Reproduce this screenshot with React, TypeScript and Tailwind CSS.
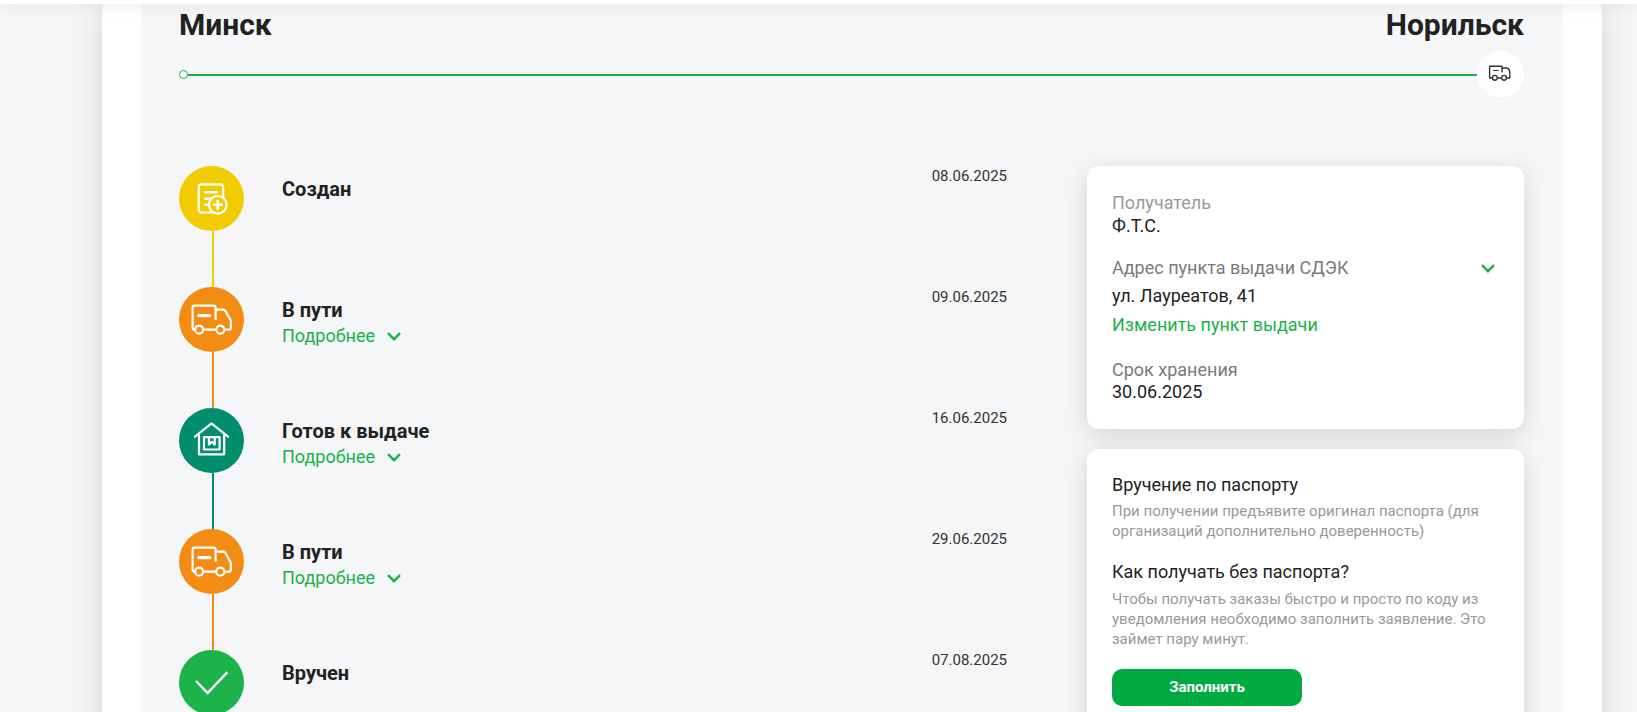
import React from "react";

type StatusKind = "created" | "transit" | "ready" | "delivered";

interface Step {
  kind: StatusKind;
  title: string;
  date: string;
  details: boolean;
}

const steps: Step[] = [
  { kind: "created", title: "Создан", date: "08.06.2025", details: false },
  { kind: "transit", title: "В пути", date: "09.06.2025", details: true },
  { kind: "ready", title: "Готов к выдаче", date: "16.06.2025", details: true },
  { kind: "transit", title: "В пути", date: "29.06.2025", details: true },
  { kind: "delivered", title: "Вручен", date: "07.08.2025", details: false },
];

const fills: Record<StatusKind, string> = {
  created: "bg-[#f2cb00]",
  transit: "bg-[#f28c13]",
  ready: "bg-[#028d6c]",
  delivered: "bg-[#1eb24a]",
};

function Chevron() {
  return (
    <svg width="14" height="9" viewBox="0 0 14 9" fill="none" aria-hidden="true">
      <path d="M1 1.2 7 7.2 13 1.2" stroke="#1ab248" strokeWidth="2.4" />
    </svg>
  );
}

function StatusIcon({ kind }: { kind: StatusKind }) {
  return (
    <svg
      className="size-full"
      viewBox="0 0 65 65"
      fill="none"
      stroke="#fff"
      strokeWidth="2.2"
      strokeLinecap="round"
      strokeLinejoin="round"
      aria-hidden="true"
    >
      {kind === "created" && (
        <>
          <path d="M44.2 30V21.3a3 3 0 0 0-3-3H22.7a3 3 0 0 0-3 3V43.5a3 3 0 0 0 3 3H36" />
          <path d="M26.2 26.2H38M26.2 32.7H31.5M26.2 38.8H29" strokeWidth="2.5" />
          <circle cx="38.8" cy="38.8" r="8.8" />
          <path d="M38.8 34.8V42.8M34.8 38.8H42.8" strokeWidth="2.5" />
        </>
      )}
      {kind === "transit" && (
        <>
          <path d="M16 42.7H15.6a2 2 0 0 1-2-2V20.6a2 2 0 0 1 2-2H34.6a2 2 0 0 1 2 2V32" />
          <path d="M36.6 22.7H44.6a2 2 0 0 1 1.7 1L51.2 32.4a3 3 0 0 1 .6 1.8V40.7a2 2 0 0 1-2 2H45.5M24.2 42.7H37" />
          <path d="M19.8 28.6H30.8" strokeWidth="3.2" />
          <circle cx="20.1" cy="42.7" r="4" />
          <circle cx="41.3" cy="42.7" r="4" />
        </>
      )}
      {kind === "ready" && (
        <>
          <path d="M16 28.7 32.5 15.4 49 28.7M20 27.4V46.3H45.2V27.4" />
          <path d="M25 29.2H40.6V41.5H25ZM29.9 29.4V36.6L32.8 33.8 35.7 36.6V29.4" />
        </>
      )}
      {kind === "delivered" && (
        <path d="M17 31 28.6 43 48.4 22.2" strokeLinecap="butt" strokeLinejoin="miter" strokeWidth="2.4" />
      )}
    </svg>
  );
}

function Timeline() {
  return (
    <ol className="min-w-0 flex-1">
      {steps.map((step, i) => (
        <li key={i} className="flex">
          <div className="flex shrink-0 flex-col items-center">
            <div className={`size-[65px] rounded-full ${fills[step.kind]}`}>
              <StatusIcon kind={step.kind} />
            </div>
            {i < steps.length - 1 && <div className={`ml-[3px] h-14 w-0.5 ${fills[step.kind]}`} />}
          </div>
          <div className="ml-[38px] flex-1 pt-[11px]">
            <h2 className="text-xl leading-6 font-bold">{step.title}</h2>
            {step.details && (
              <button type="button" className="mt-0.5 flex items-center gap-3 text-lg leading-6 text-[#1ab248]">
                Подробнее
                <Chevron />
              </button>
            )}
          </div>
          <time className="text-[15px] leading-5 text-[#333]">{step.date}</time>
        </li>
      ))}
    </ol>
  );
}

function Route() {
  return (
    <section>
      <div className="flex justify-between text-3xl leading-10 font-bold">
        <h1>Минск</h1>
        <p>Норильск</p>
      </div>
      <div className="mt-1.5 flex items-center">
        <span className="size-[9px] rounded-full border border-[#1ab248] bg-white" />
        <span className="h-0.5 flex-1 bg-[#1ab248]" />
        <span className="size-[47px] rounded-full bg-white">
          <svg
            className="size-full"
            viewBox="0 0 47 47"
            fill="none"
            stroke="#333"
            strokeWidth="1.4"
            strokeLinejoin="round"
            aria-hidden="true"
          >
            <path d="M15 27H12.6V15.2H25V21.2M25 17H29.8Q32.8 18 32.8 21.9V27H29.8M20.4 27H24.4" />
            <path d="M16 19.4H21.8" strokeWidth="1" />
            <circle cx="17.8" cy="26.8" r="2.4" />
            <circle cx="27.1" cy="26.8" r="2.4" />
          </svg>
        </span>
      </div>
    </section>
  );
}

const card = "rounded-xl bg-white px-[25px] shadow-[0_6px_24px_rgba(0,0,0,0.14)]";

function RecipientCard() {
  return (
    <section className={`${card} py-[26px] text-lg leading-[22px]`}>
      <p className="text-[#999]">Получатель</p>
      <p className="mt-px">Ф.Т.С.</p>
      <button type="button" className="mt-5 flex w-full items-center justify-between pr-1 text-left text-[#7a7a7a]">
        Адрес пункта выдачи СДЭК
        <Chevron />
      </button>
      <p className="mt-1.5">ул. Лауреатов, 41</p>
      <a href="#pickup" className="mt-[7px] block text-[#1ab248]">
        Изменить пункт выдачи
      </a>
      <p className="mt-[23px] text-[#7a7a7a]">Срок хранения</p>
      <p>30.06.2025</p>
    </section>
  );
}

function PassportCard() {
  return (
    <section className={`${card} pt-[25px] pb-10`}>
      <h3 className="text-lg leading-[22px]">Вручение по паспорту</h3>
      <p className="mt-[5px] text-[15px] leading-5 text-[#999]">
        При получении предъявите оригинал паспорта (для организаций дополнительно доверенность)
      </p>
      <h3 className="mt-5 text-lg leading-[22px]">Как получать без паспорта?</h3>
      <p className="mt-1.5 text-[15px] leading-5 text-[#999]">
        Чтобы получать заказы быстро и просто по коду из уведомления необходимо заполнить заявление. Это займет пару минут.
      </p>
      <button type="button" className="mt-5 h-[37px] w-[190px] rounded-[10px] bg-[#00aa41] text-[15px] font-bold text-white">
        Заполнить
      </button>
    </section>
  );
}

export default function App() {
  return (
    <div className="flex h-screen flex-col overflow-hidden bg-[#f5f6f8] font-[Roboto,sans-serif] text-[#222]">
      <header className="relative z-10 h-1 shrink-0 bg-white shadow-[0_0_16px_rgba(0,0,0,0.18)]" />
      <main className="mr-[35px] ml-[102px] flex-1 bg-white px-10 shadow-[0_0_28px_rgba(0,0,0,0.13)]">
        <div className="bg-[#f5f6f8] pt-px pr-[38px] pl-[37px]">
          <Route />
          <div className="mt-[68px] flex items-start gap-20 pb-10">
            <Timeline />
            <aside className="flex w-[437px] shrink-0 flex-col gap-5">
              <RecipientCard />
              <PassportCard />
            </aside>
          </div>
        </div>
      </main>
    </div>
  );
}
